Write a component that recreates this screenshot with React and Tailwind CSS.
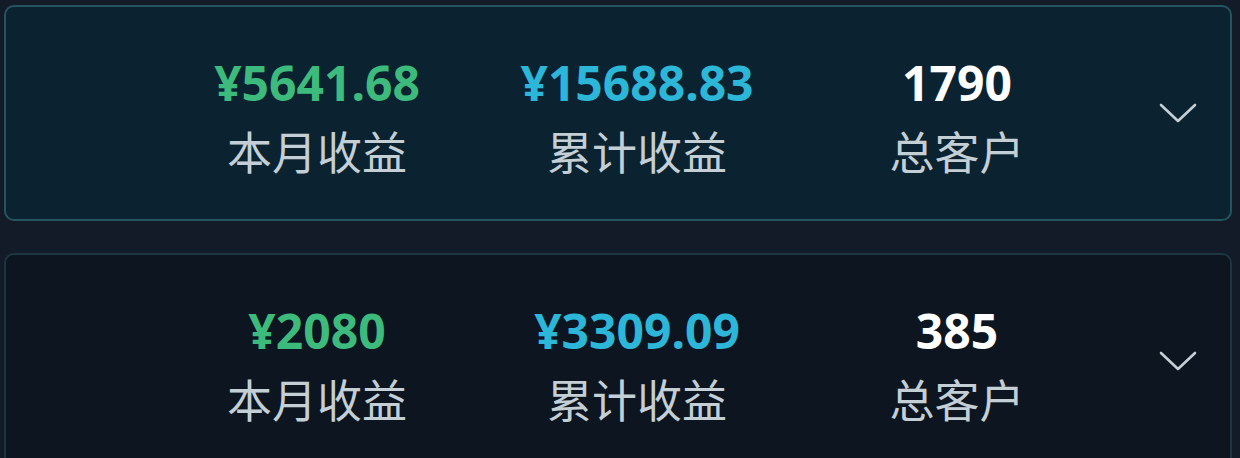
import React from 'react';

const cards = [
    {
        month: '¥5641.68',
        total: '¥15688.83',
        customers: '1790',
        active: true,
    },
    {
        month: '¥2080',
        total: '¥3309.09',
        customers: '385',
        active: false,
    },
];

const Stat = ({ value, label, color }) => (
    <div className="w-[320px] flex flex-col items-center">
        <div
            className={`text-[48px] leading-[50px] font-bold ${color}`}
            style={{ fontFamily: '"Noto Sans", "Noto Sans CJK SC", sans-serif' }}
        >
            {value}
        </div>
        <div
            className="mt-[18px] text-[45px] leading-[50px] text-[#c3cfd5]"
            style={{ fontFamily: '"Noto Sans CJK SC", sans-serif' }}
        >
            {label}
        </div>
    </div>
);

const Chevron = () => (
    <svg width="40" height="24" viewBox="0 0 40 24" fill="none">
        <path d="M3 4 L20 20 L37 4" stroke="#c3cfd5" strokeWidth="2.6" strokeLinecap="round" strokeLinejoin="round" />
    </svg>
);

const App = () => {
    return (
        <div className="w-[1240px] h-[458px] overflow-hidden bg-[#131a28] pl-[4px] pr-[8px] pt-[5px] flex flex-col gap-[32px]">
            {cards.map((card, i) => (
                <div
                    key={i}
                    className={`h-[216px] shrink-0 rounded-[10px] border-2 flex items-start pl-[151px] pt-[51px] ${card.active
                            ? 'bg-[#0b2230] border-[#24545f]'
                            : 'bg-[#0d1520] border-[#1b3641]'
                        }`}
                >
                    <Stat value={card.month} label="本月收益" color="text-[#3dbb7c]" />
                    <Stat value={card.total} label="累计收益" color="text-[#2cb6d8]" />
                    <Stat value={card.customers} label="总客户" color="text-white" />
                    {/* expand toggle */}
                    <div className="ml-[41px] mt-[43px]">
                        <Chevron />
                    </div>
                </div>
            ))}
        </div>
    );
};

export default App;
